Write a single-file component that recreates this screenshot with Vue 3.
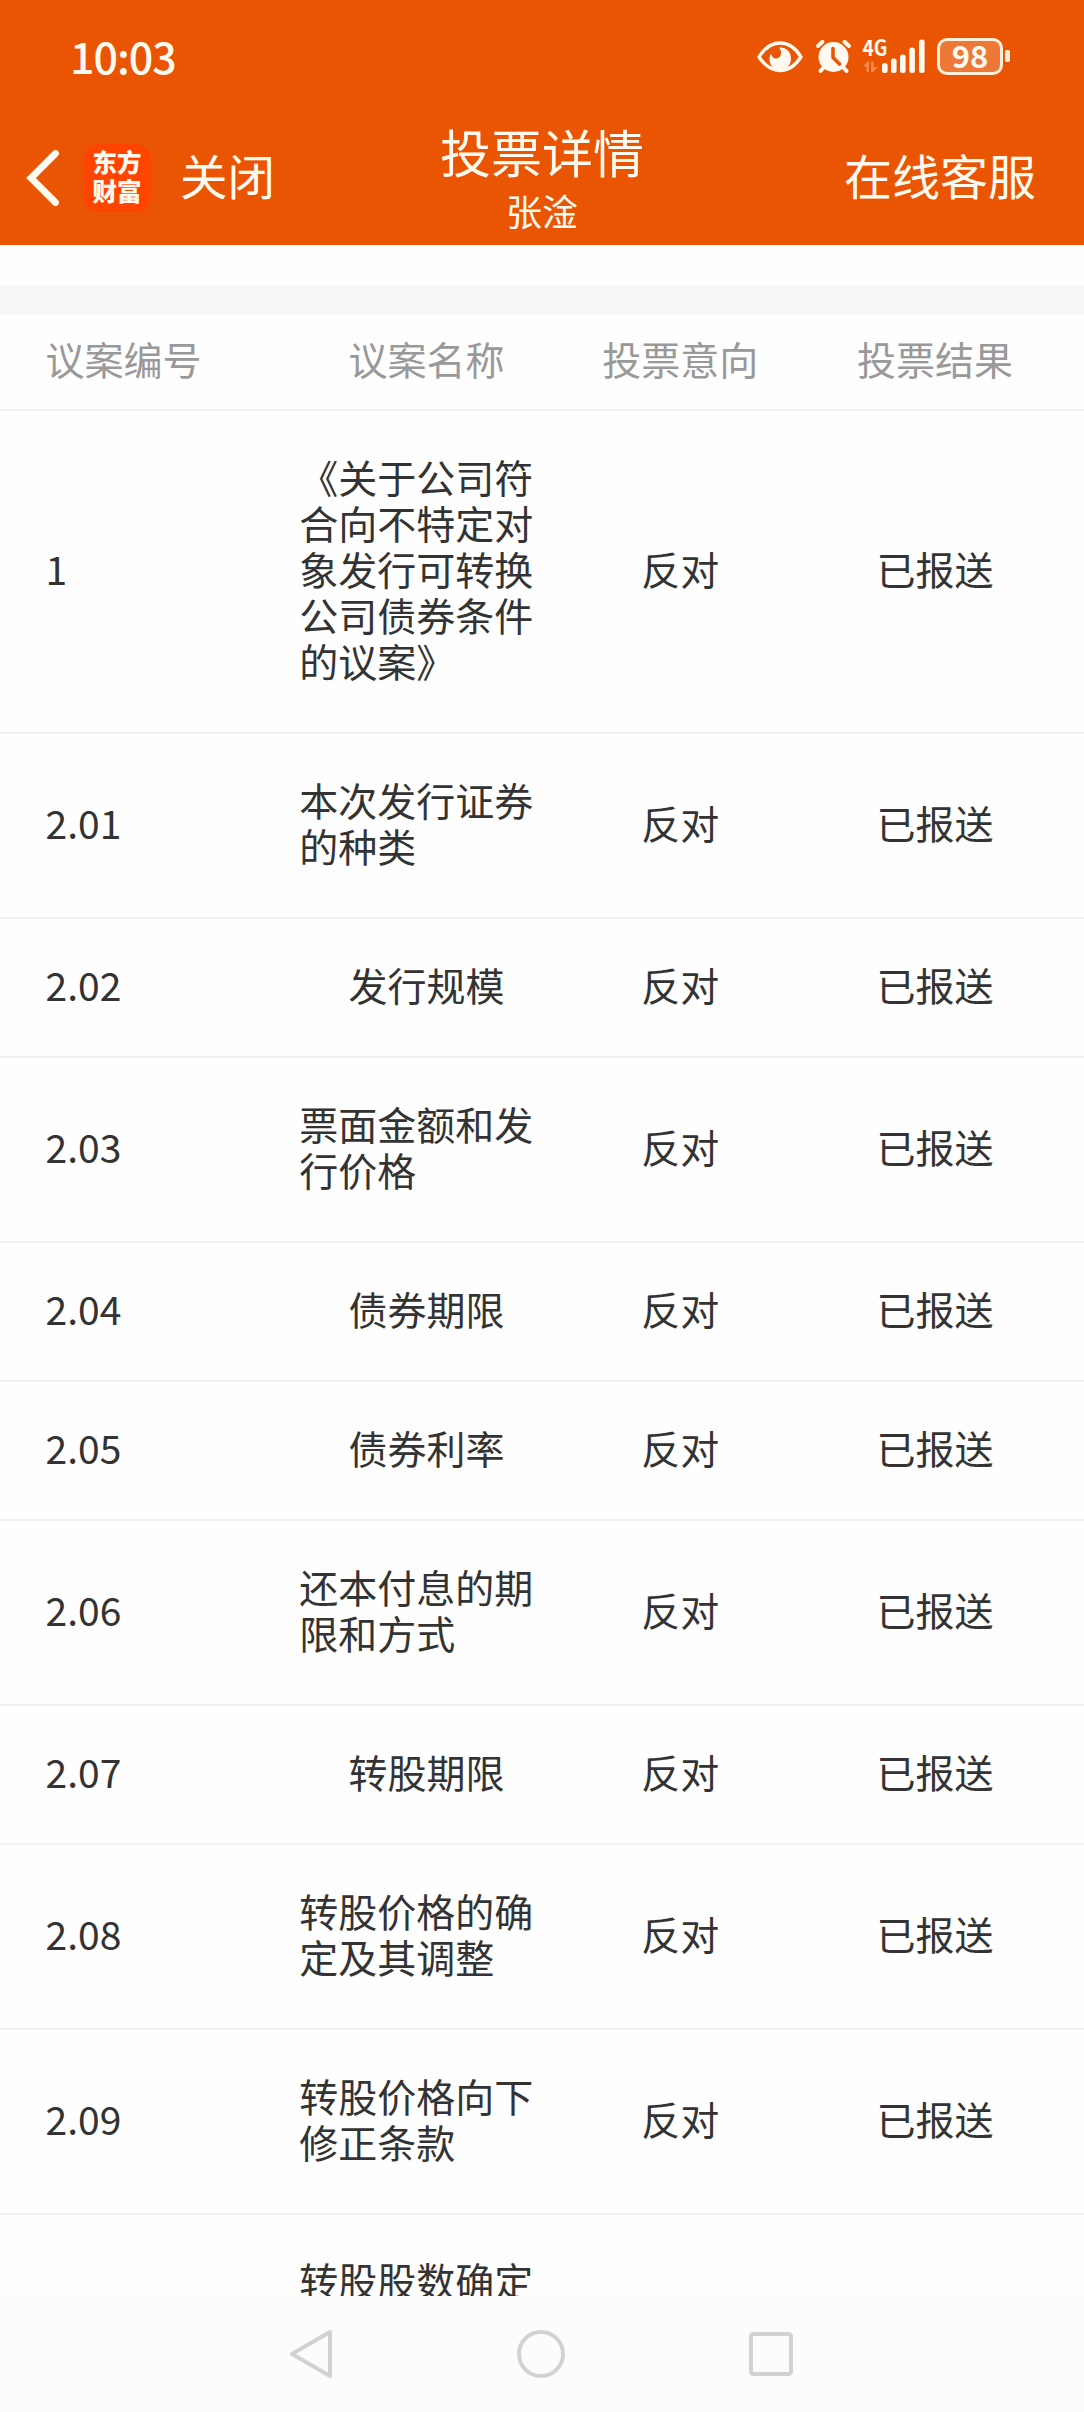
<template>
  <div class="page">
    <header class="top">
      <div class="status-bar">
        <span class="time">10:03</span>
        <div class="status-icons">
          <svg class="eye" width="46" height="36" viewBox="0 0 46 36">
            <path d="M2 19 C8 9 15 5 23 5 C31 5 38 9 44 19 C38 28 31 32.500 23 32.500 C15 32.500 8 28 2 19 Z" fill="none" stroke="#fffaf0" stroke-width="3.400" stroke-linejoin="round" />
            <path d="M22 9.500 C29 9 34 13.500 34 20.500 C34 27 29.500 32 23.500 32 C17 32 12.500 27.500 12.500 21 C12.500 19 13 17.300 14 15.800 C15 19 17 21 19.500 20.500 C24.500 19.500 25.500 13.500 22 9.500 Z" fill="#fffaf0" />
          </svg>
          <svg class="alarm" width="37" height="36" viewBox="0 0 37 36">
            <g stroke="#fffaf0" stroke-width="4" stroke-linecap="round">
              <path d="M3 8 L7.500 3.800" />
              <path d="M34 8 L29.500 3.800" />
              <path d="M9 29 L5.500 33" />
              <path d="M28 29 L31.500 33" />
            </g>
            <circle cx="18.500" cy="19" r="15" fill="#fffaf0" />
            <path d="M18 10.500 V19.500 L24.500 26" fill="none" stroke="#ea5504" stroke-width="3.600" stroke-linecap="round" stroke-linejoin="round" />
          </svg>
          <svg class="signal" width="63" height="36" viewBox="0 0 63 36">
            <text x="0.500" y="17.500" class="net" textLength="25" lengthAdjust="spacingAndGlyphs">4G</text>
            <path d="M1 28.500 L5.500 23.500 H7 V34 H4.500 V28.500 Z M9 23.500 H11.500 V29 H16 L10.500 34.500 H9 Z" fill="#f48a51" />
            <rect
              v-for="(b, i) in bars"
              :key="i"
              :x="b.x"
              :y="35 - b.h"
              width="5.600"
              :height="b.h"
              rx="2.500"
              fill="#fffaf0"
            />
          </svg>
          <div class="battery">98</div>
          <i class="battery-tip"></i>
        </div>
      </div>

      <div class="nav-bar">
        <div class="nav-left">
          <svg width="34" height="58" viewBox="0 0 34 58">
            <path d="M29.500 4.500 L5 29 L29.500 53.500" fill="none" stroke="#fffaf0" stroke-width="6.800" stroke-linecap="round" stroke-linejoin="miter" />
          </svg>
          <div class="logo"><span>东方</span><span>财富</span></div>
          <span class="close">关闭</span>
        </div>
        <div class="nav-title">
          <div class="title">投票详情</div>
          <div class="subtitle">张淦</div>
        </div>
        <div class="nav-right">在线客服</div>
      </div>
    </header>

    <main class="content">
      <div class="band"></div>
      <div class="row head">
        <div v-for="h in heads" :key="h" class="cell"><span>{{ h }}</span></div>
      </div>
      <div v-for="(r, i) in rows" :key="i" class="row">
        <div class="cell"><span>{{ r.no }}</span></div>
        <div class="cell"><span>{{ r.name }}</span></div>
        <div class="cell"><span>{{ r.vote }}</span></div>
        <div class="cell"><span>{{ r.result }}</span></div>
      </div>
    </main>

    <footer class="sys-nav">
      <svg width="48" height="52" viewBox="0 0 48 52">
        <path d="M42 4 V48 L4 26 Z" fill="none" stroke="#d2d2d2" stroke-width="4" stroke-linejoin="round" />
      </svg>
      <svg width="48" height="48" viewBox="0 0 48 48">
        <circle cx="24" cy="24" r="22" fill="none" stroke="#d2d2d2" stroke-width="4" />
      </svg>
      <svg width="44" height="44" viewBox="0 0 44 44">
        <rect x="2" y="2" width="40" height="40" rx="2.500" fill="none" stroke="#d2d2d2" stroke-width="4" />
      </svg>
    </footer>
  </div>
</template>

<script setup>
const bars = [
  { x: 20, h: 10 },
  { x: 29, h: 14.5 },
  { x: 38, h: 18.5 },
  { x: 47.300, h: 25.5 },
  { x: 57, h: 33.5 },
];

const heads = ['议案编号', '议案名称', '投票意向', '投票结果'];

const vote = '反对';
const result = '已报送';
const rows = [
  { no: '1', name: '《关于公司符合向不特定对象发行可转换公司债券条件的议案》', vote, result },
  { no: '2.01', name: '本次发行证券的种类', vote, result },
  { no: '2.02', name: '发行规模', vote, result },
  { no: '2.03', name: '票面金额和发行价格', vote, result },
  { no: '2.04', name: '债券期限', vote, result },
  { no: '2.05', name: '债券利率', vote, result },
  { no: '2.06', name: '还本付息的期限和方式', vote, result },
  { no: '2.07', name: '转股期限', vote, result },
  { no: '2.08', name: '转股价格的确定及其调整', vote, result },
  { no: '2.09', name: '转股价格向下修正条款', vote, result },
  { name: '转股股数确定' },
];
</script>

<style>
body {
  margin: 0;
  background: #fff;
}
</style>

<style scoped>
.page {
  width: 1084px;
  height: 2412px;
  display: flex;
  flex-direction: column;
  overflow: hidden;
  background: #fefefe;
  font-family: "Noto Sans CJK SC", "Noto Sans", sans-serif;
  color: #333;
}
.top {
  flex: none;
  height: 245px;
  background: #ea5504;
  color: #fffaf0;
}
.status-bar {
  display: flex;
  align-items: center;
  justify-content: space-between;
  height: 112px;
  padding: 0 74px 0 70px;
}
.time {
  padding-bottom: 3px;
  font-size: 43px;
  font-weight: 500;
  line-height: 50px;
  letter-spacing: -1px;
}
.status-icons {
  display: flex;
  align-items: center;
}
.alarm {
  margin-left: 12px;
}
.signal {
  margin-left: 10px;
}
.net {
  font-size: 22px;
  font-weight: 700;
  fill: #fffaf0;
}
.battery {
  box-sizing: border-box;
  width: 66px;
  height: 37px;
  margin-left: 12px;
  border: 3px solid #fff0dc;
  border-radius: 10px;
  background: #ee7838;
  font-size: 31px;
  font-weight: 700;
  line-height: 27px;
  text-align: center;
}
.battery-tip {
  width: 5px;
  height: 12px;
  margin-left: 2px;
  border-radius: 2px;
  background: #fff0dc;
}
.nav-bar {
  display: grid;
  grid-template-columns: 1fr auto 1fr;
  height: 133px;
  padding: 0 48px 0 26px;
}
.nav-left {
  display: flex;
  align-items: center;
  height: 131px;
}
.logo {
  box-sizing: border-box;
  display: flex;
  flex-direction: column;
  justify-content: center;
  align-items: center;
  width: 68px;
  height: 68px;
  margin-left: 23px;
  padding-bottom: 3px;
  border-radius: 15px;
  background: #ff4400;
  font-size: 24.500px;
  font-weight: 900;
  line-height: 29.500px;
}
.close {
  margin-left: 29px;
  padding-bottom: 6px;
  font-size: 47.500px;
}
.nav-title {
  text-align: center;
  margin-left: 22px;
}
.title {
  margin-top: 6px;
  font-size: 51px;
  line-height: 66px;
}
.subtitle {
  font-size: 36px;
  line-height: 52px;
}
.nav-right {
  font-size: 48px;
  line-height: 125px;
  text-align: right;
}
.content {
  flex: 1;
  min-height: 0;
  overflow: hidden;
}
.band {
  height: 30px;
  margin-top: 40px;
  background: #f6f8fa;
}
.row {
  display: flex;
  align-items: center;
  padding: 41.900px 21.500px 48.900px 43.500px;
  border-bottom: 2px solid #f1f1f1;
  font-size: 39px;
  line-height: 46.100px;
}
.row:last-child {
  border-bottom: none;
}
.row:last-child .cell {
  justify-content: flex-start;
}
.head {
  padding-top: 19.500px;
  padding-bottom: 28.400px;
  color: #999;
}
.cell {
  display: flex;
  justify-content: center;
  flex: 1 1 0;
  min-width: 0;
}
.cell:nth-child(2) {
  padding-left: 1px;
  margin-right: -1px;
}
.cell:first-child {
  justify-content: flex-start;
  padding-left: 2px;
  margin-right: -2px;
}
.sys-nav {
  flex: none;
  display: flex;
  align-items: center;
  justify-content: space-between;
  height: 116px;
  padding: 0 291px 0 288px;
  background: #fcfcfc;
}
.sys-nav svg:nth-child(2) {
  margin-right: 3px;
}
</style>
